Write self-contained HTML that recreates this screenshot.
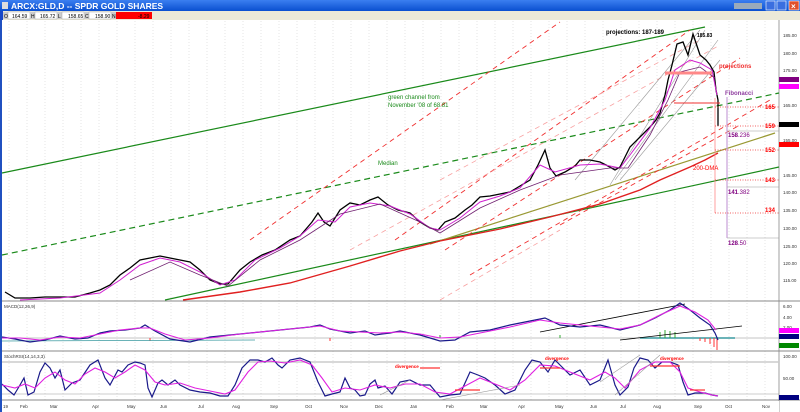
<!DOCTYPE html>
<html><head><meta charset="utf-8"><style>
body{margin:0;width:800px;height:412px;overflow:hidden;background:#fff;font-family:"Liberation Sans",sans-serif}
svg{display:block}
</style></head><body>
<svg width="800" height="412" viewBox="0 0 800 412" xmlns="http://www.w3.org/2000/svg" font-family="Liberation Sans, sans-serif">
<defs>
<linearGradient id="tb" x1="0" y1="0" x2="0" y2="1"><stop offset="0" stop-color="#3b7ff0"/><stop offset="1" stop-color="#0a4fd0"/></linearGradient>
<pattern id="grid" width="18" height="412" patternUnits="userSpaceOnUse"><line x1="9" y1="0" x2="9" y2="412" stroke="#d6d6d6" stroke-width="0.6" stroke-dasharray="1,2"/></pattern>
</defs>
<rect x="0" y="0" width="800" height="412" fill="#fff"/>
<rect x="0" y="0" width="800" height="11" fill="url(#tb)"/>
<rect x="2" y="2" width="6" height="7" fill="#ddd"/>
<text x="11" y="9" font-size="8.5" font-weight="bold" fill="#fff">ARCX:GLD,D -- SPDR GOLD SHARES</text>
<rect x="734" y="3" width="28" height="6" fill="#9ab"/>
<rect x="766" y="1" width="9" height="9" fill="#3a6fe0" stroke="#fff" stroke-width="0.6"/>
<rect x="777" y="1" width="9" height="9" fill="#3a6fe0" stroke="#fff" stroke-width="0.6"/>
<rect x="789" y="1" width="10" height="9" fill="#e0502a" stroke="#fff" stroke-width="0.6"/>
<text x="791" y="9" font-size="8" fill="#fff" font-weight="bold">×</text>
<rect x="0" y="11" width="800" height="9" fill="#ece9d8"/>
<rect x="0" y="11" width="3" height="9" fill="#1848c8"/>
<g font-size="5" fill="#000">
<rect x="3" y="12" width="5" height="7" fill="#ccc"/><text x="4" y="18">O</text>
<rect x="8" y="12" width="22" height="7" fill="#fff" stroke="#999" stroke-width="0.4"/><text x="12" y="18">164.59</text>
<rect x="30" y="12" width="5" height="7" fill="#ccc"/><text x="31" y="18">H</text>
<rect x="35" y="12" width="22" height="7" fill="#fff" stroke="#999" stroke-width="0.4"/><text x="40" y="18">165.72</text>
<rect x="57" y="12" width="5" height="7" fill="#ccc"/><text x="58" y="18">L</text>
<rect x="62" y="12" width="22" height="7" fill="#fff" stroke="#999" stroke-width="0.4"/><text x="68" y="18">158.65</text>
<rect x="84" y="12" width="5" height="7" fill="#ccc"/><text x="85" y="18">C</text>
<rect x="89" y="12" width="22" height="7" fill="#fff" stroke="#999" stroke-width="0.4"/><text x="95" y="18">158.90</text>
<rect x="111" y="12" width="5" height="7" fill="#ccc"/><text x="112" y="18">N</text>
<rect x="116" y="12" width="36" height="7" fill="#f00"/><text x="138" y="18">-8.29</text>
</g>
<rect x="2" y="20" width="777" height="380" fill="url(#grid)"/>
<line x1="1" y1="20" x2="1" y2="412" stroke="#2050c0" stroke-width="2"/>
<line x1="779" y1="20" x2="779" y2="412" stroke="#888" stroke-width="0.8"/>
<line x1="2" y1="301" x2="800" y2="301" stroke="#888" stroke-width="1"/>
<line x1="2" y1="351" x2="800" y2="351" stroke="#888" stroke-width="1"/>
<line x1="2" y1="400" x2="800" y2="400" stroke="#888" stroke-width="1"/>
<g font-size="4.5" fill="#333">
<text x="783" y="37">185.00</text><text x="783" y="55">180.00</text><text x="783" y="72">175.00</text>
<text x="783" y="107">165.00</text><text x="783" y="142">155.00</text><text x="783" y="177">145.00</text>
<text x="783" y="194">140.00</text><text x="783" y="212">135.00</text><text x="783" y="230">130.00</text>
<text x="783" y="248">125.00</text><text x="783" y="265">120.00</text><text x="783" y="282">115.00</text>
<text x="783" y="308">6.00</text><text x="783" y="319">4.00</text><text x="783" y="329">2.00</text>
<text x="783" y="358">100.00</text><text x="783" y="380">50.00</text>
</g>
<rect x="779" y="77" width="20" height="5" fill="#800080"/><rect x="779" y="84" width="20" height="5" fill="#f0f"/>
<rect x="779" y="122" width="20" height="5" fill="#000"/><rect x="779" y="142" width="20" height="5" fill="#f00"/>
<rect x="779" y="328" width="20" height="5" fill="#f0f"/><rect x="779" y="334" width="20" height="5" fill="#000080"/>
<rect x="779" y="343" width="20" height="5" fill="#080"/><rect x="779" y="395" width="20" height="5" fill="#000080"/>

<line x1="2" y1="173" x2="705" y2="27" stroke="#1a8a1a" stroke-width="1.2"/>
<line x1="2" y1="255" x2="779" y2="93" stroke="#1a8a1a" stroke-width="1.2" stroke-dasharray="6,4"/>
<line x1="165" y1="300" x2="779" y2="167" stroke="#1a8a1a" stroke-width="1.2"/>
<line x1="430" y1="244" x2="775" y2="133" stroke="#999933" stroke-width="1.2"/>
<g stroke="#f03030" stroke-width="0.9" stroke-dasharray="5,4" fill="none">
<line x1="250" y1="240" x2="560" y2="22"/>
<line x1="395" y1="240" x2="690" y2="30"/>
<line x1="445" y1="250" x2="740" y2="58"/>
<line x1="470" y1="275" x2="770" y2="100"/>
<line x1="560" y1="225" x2="740" y2="125"/>
</g>
<g stroke="#f8a0a0" stroke-width="0.8" stroke-dasharray="5,4" fill="none">
<line x1="440" y1="180" x2="700" y2="40"/>
<line x1="350" y1="250" x2="720" y2="45"/>
<line x1="440" y1="300" x2="560" y2="230"/>
</g>
<g stroke="#999" stroke-width="0.6" fill="none">
<line x1="575" y1="180" x2="700" y2="30"/><line x1="610" y1="185" x2="705" y2="30"/>
<line x1="615" y1="180" x2="718" y2="40"/><line x1="620" y1="180" x2="720" y2="60"/>
</g>
<polyline fill="none" stroke="#e02020" stroke-width="1.4" points="183,300 240,292 290,283 350,266 400,251 440,241 500,229 550,217 600,204 640,190 660,180 690,167 705,160 718,153"/>
<polyline fill="none" stroke="#000" stroke-width="1.3" points="5,292 15,298 30,298 45,297 60,297 75,297 90,293 100,290 110,285 120,275 130,268 140,260 150,258 160,256 170,258 180,260 190,262 200,270 210,280 220,284 228,284 240,270 250,262 262,255 275,250 290,240 300,236 312,222 318,213 324,222 330,226 340,210 350,203 360,205 370,200 378,197 388,205 398,210 410,213 420,222 430,228 438,230 445,222 455,218 465,210 472,205 480,197 490,196 500,194 510,192 520,186 530,180 538,165 545,150 550,168 556,176 565,172 575,166 580,160 590,160 600,162 608,166 615,170 620,167 625,157 630,147 640,137 650,127 656,120 660,113 665,95 668,80 672,65 677,44 683,42 688,55 693,34 697,46 700,55 706,60 710,65 714,72 716,90 718,100 718,126"/>
<polyline fill="none" stroke="#d020d0" stroke-width="1" points="20,300 60,298 100,293 120,280 140,265 160,258 180,262 200,272 220,285 235,280 255,260 280,248 300,236 318,220 335,222 350,207 370,203 390,206 410,214 430,228 440,230 460,218 480,202 500,196 520,188 540,165 555,172 580,165 600,164 620,168 630,155 650,128 665,100 675,70 690,60 700,63 712,70 717,95"/>
<polyline fill="none" stroke="#702070" stroke-width="0.8" points="130,280 170,262 200,275 228,286 260,260 300,240 340,214 380,204 420,222 440,233 480,208 520,190 560,175 610,168 628,168 650,135 668,100 680,72 700,67 715,78"/>
<line x1="665" y1="73" x2="712" y2="73" stroke="#f88" stroke-width="3"/>
<line x1="674" y1="103" x2="720" y2="103" stroke="#f03030" stroke-width="1"/>
<line x1="715" y1="98" x2="715" y2="213" stroke="#f88" stroke-width="0.8"/>
<line x1="727" y1="97" x2="727" y2="238" stroke="#c8a0d8" stroke-width="1.2"/>
<g stroke="#999" stroke-width="0.6"><line x1="727" y1="131" x2="779" y2="131"/><line x1="727" y1="187" x2="779" y2="187"/><line x1="727" y1="238" x2="779" y2="238"/></g>
<g stroke="#f03030" stroke-width="0.7" stroke-dasharray="1,1.5"><line x1="715" y1="107" x2="779" y2="107"/><line x1="715" y1="126" x2="779" y2="126"/><line x1="715" y1="150" x2="779" y2="150"/><line x1="715" y1="180" x2="779" y2="180"/><line x1="715" y1="213" x2="779" y2="213"/></g>
<g font-size="6" font-weight="bold">
<text x="606" y="34" fill="#000">projections:    187-189</text>
<text x="697" y="37" fill="#000" font-size="5">185.83</text>
<text x="719" y="68" fill="#f03030">projections</text>
<text x="725" y="95" fill="#9040a0">Fibonacci</text>
<text x="765" y="109" fill="#f00">165</text><text x="765" y="128" fill="#f00">159</text>
<text x="728" y="137" fill="#800080">158<tspan font-weight="normal">.236</tspan></text>
<text x="765" y="152" fill="#f00">152</text><text x="765" y="182" fill="#f00">143</text>
<text x="728" y="194" fill="#800080">141<tspan font-weight="normal">.382</tspan></text>
<text x="765" y="212" fill="#f00">134</text>
<text x="728" y="245" fill="#800080">128<tspan font-weight="normal">.50</tspan></text>
<text x="388" y="99" fill="#1a8a1a" font-weight="normal">green channel from</text>
<text x="388" y="107" fill="#1a8a1a" font-weight="normal">November '08 of 68.81</text>
<text x="378" y="165" fill="#1a8a1a" font-weight="normal">Median</text>
<text x="693" y="170" fill="#f00" font-weight="normal">200-DMA</text>
</g>
<text x="4" y="308" font-size="4.5" fill="#333">MACD(12,26,9)</text>
<line x1="2" y1="338" x2="779" y2="338" stroke="#888" stroke-width="0.5"/>
<line x1="640" y1="338" x2="735" y2="338" stroke="#3a9aa0" stroke-width="1.5"/>
<g stroke="#3a3" stroke-width="1"><line x1="660" y1="338" x2="660" y2="332"/><line x1="665" y1="338" x2="665" y2="330"/><line x1="670" y1="338" x2="670" y2="331"/><line x1="675" y1="338" x2="675" y2="332"/><line x1="440" y1="338" x2="440" y2="335"/><line x1="560" y1="338" x2="560" y2="335"/></g>
<g stroke="#f33" stroke-width="1"><line x1="700" y1="338" x2="700" y2="341"/><line x1="705" y1="338" x2="705" y2="342"/><line x1="710" y1="338" x2="710" y2="344"/><line x1="714" y1="338" x2="714" y2="347"/><line x1="717" y1="338" x2="717" y2="350"/><line x1="150" y1="338" x2="150" y2="341"/><line x1="330" y1="338" x2="330" y2="341"/></g>
<line x1="2" y1="341" x2="255" y2="340" stroke="#3a9aa0" stroke-width="0.8"/>
<line x1="540" y1="332" x2="685" y2="304" stroke="#000" stroke-width="0.8"/>
<line x1="620" y1="340" x2="742" y2="326" stroke="#000" stroke-width="0.8"/>
<polyline fill="none" stroke="#1a1a8a" stroke-width="1.2" points="2,337 15,339 30,342 45,340 60,336 75,339 88,338 100,333 110,331 125,330 140,328 145,325 155,331 170,339 190,342 210,337 230,335 250,333 270,331 290,329 310,327 320,325 330,329 350,333 365,331 375,335 390,333 400,331 420,335 440,341 455,340 470,332 490,330 510,325 530,321 545,318 560,325 580,327 600,325 620,330 640,325 655,318 670,310 680,303 690,310 700,318 710,325 715,333 718,340"/>
<polyline fill="none" stroke="#e020e0" stroke-width="1.1" points="2,338 20,338 40,340 60,337 80,338 100,334 120,330 140,328 150,328 165,334 185,340 210,338 240,334 270,331 300,328 320,326 340,331 360,332 380,333 400,332 420,334 440,338 460,337 480,333 510,327 540,320 560,323 590,326 620,329 640,325 660,315 680,306 695,312 708,320 716,330"/>
<text x="4" y="358" font-size="4.5" fill="#333">StochRSI(14,14,3,3)</text>
<line x1="2" y1="362" x2="779" y2="362" stroke="#ccc" stroke-width="1.5"/>
<line x1="2" y1="394" x2="779" y2="394" stroke="#999" stroke-width="0.6"/>
<polyline fill="none" stroke="#1a1a8a" stroke-width="1.2" points="2,384 8,390 14,395 20,385 24,378 28,395 34,392 40,372 45,363 50,368 55,378 60,370 65,390 72,383 80,380 90,365 98,360 105,378 110,385 118,370 122,372 128,365 135,362 140,363 145,365 148,388 152,397 158,383 162,380 168,385 175,380 180,385 190,390 200,392 210,393 220,396 228,396 235,385 242,368 250,360 258,360 265,362 272,358 278,365 282,368 290,360 300,358 310,362 318,382 325,396 332,394 340,392 345,378 350,388 355,390 360,396 365,395 370,384 375,380 378,388 385,386 392,394 400,382 410,380 420,385 430,385 440,397 450,395 460,394 470,372 478,375 485,378 495,385 505,394 515,390 525,370 532,360 540,362 548,372 555,360 560,365 570,375 580,370 590,385 600,380 608,360 615,385 620,395 628,387 634,368 640,358 648,360 655,368 662,362 670,362 678,365 683,382 688,395 695,393 705,393 712,395 718,396"/>
<polyline fill="none" stroke="#e020e0" stroke-width="1.1" points="2,385 15,388 25,384 35,388 45,378 55,372 65,380 75,384 85,374 95,368 105,372 115,378 125,372 135,365 145,370 155,382 165,385 180,383 195,388 210,391 225,394 235,390 248,372 258,362 270,361 285,363 300,360 312,365 322,378 332,392 345,388 360,390 375,385 390,388 405,384 420,384 435,392 450,394 465,386 480,378 495,384 510,390 525,380 540,365 555,366 570,372 590,380 605,372 615,378 625,388 640,370 655,362 670,362 680,372 688,388 700,392 712,395 718,396"/>
<g stroke="#f33" stroke-width="1.2"><line x1="420" y1="368" x2="440" y2="368"/><line x1="540" y1="368" x2="560" y2="368"/><line x1="650" y1="366" x2="680" y2="366"/><line x1="690" y1="390" x2="705" y2="390"/><line x1="455" y1="390" x2="480" y2="390"/></g>
<line x1="600" y1="382" x2="640" y2="355" stroke="#999" stroke-width="0.6"/>
<line x1="615" y1="395" x2="660" y2="355" stroke="#999" stroke-width="0.6"/>
<line x1="380" y1="395" x2="410" y2="380" stroke="#999" stroke-width="0.6"/>
<line x1="440" y1="400" x2="520" y2="385" stroke="#999" stroke-width="0.6"/>
<text x="660" y="360" font-size="4.5" fill="#f00" font-weight="bold">divergence</text>
<text x="545" y="360" font-size="4.5" fill="#f00" font-weight="bold">divergence</text>
<text x="395" y="368" font-size="4.5" fill="#f00" font-weight="bold">divergence</text>
<rect x="2" y="401" width="777" height="11" fill="#fff"/>
<g font-size="4.5" fill="#333">
<text x="3" y="408">19</text><text x="20" y="408">Feb</text><text x="50" y="408">Mar</text><text x="92" y="408">Apr</text><text x="127" y="408">May</text><text x="160" y="408">Jun</text><text x="198" y="408">Jul</text><text x="232" y="408">Aug</text><text x="270" y="408">Sep</text><text x="305" y="408">Oct</text><text x="340" y="408">Nov</text><text x="375" y="408">Dec</text><text x="410" y="408">Jan</text><text x="446" y="408">Feb</text><text x="480" y="408">Mar</text><text x="518" y="408">Apr</text><text x="555" y="408">May</text><text x="590" y="408">Jun</text><text x="620" y="408">Jul</text><text x="653" y="408">Aug</text><text x="694" y="408">Sep</text><text x="725" y="408">Oct</text><text x="762" y="408">Nov</text>
</g>
</svg>
</body></html>
